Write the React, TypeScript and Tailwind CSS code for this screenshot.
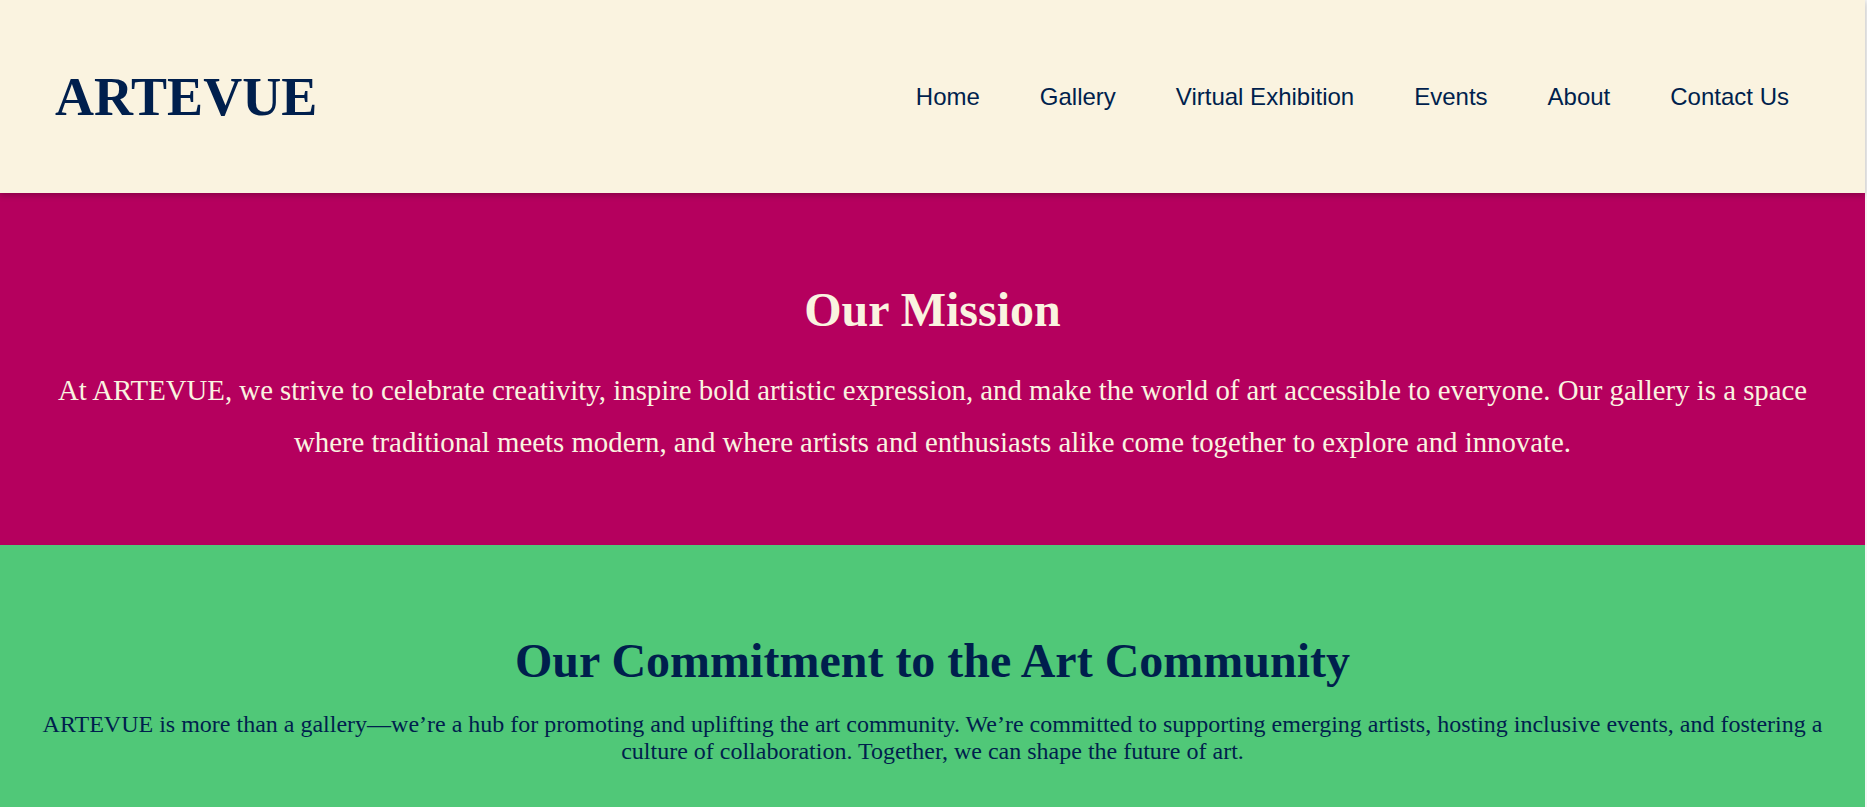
const navLinks = ["Home", "Gallery", "Virtual Exhibition", "Events", "About", "Contact Us"];

export default function App() {
    return (
        <div className="min-h-screen bg-[#f5f5f5]" style={{ fontFamily: '"Liberation Serif", "Times New Roman", serif' }}>
            <div className="w-[1865px]">
                <header className="relative z-10 flex h-[193px] items-center justify-between bg-[#FAF3E0] pl-[55px] pr-[76px] shadow-[0_2px_6px_rgba(0,0,0,0.25)]">
                    <h1 className="text-[54px] font-bold leading-none text-[#001F4D]">ARTEVUE</h1>
                    <nav className="flex items-center gap-[60px] font-['Liberation_Sans',Arial,sans-serif] text-[24px] text-[#001F4D]">
                        {navLinks.map((link) => (
                            <a key={link} href="#" className="hover:opacity-70">
                                {link}
                            </a>
                        ))}
                    </nav>
                </header>

                <section className="flex h-[352px] flex-col items-center bg-[#B5005E] px-[40px] pt-[93px] text-center">
                    <h2 className="text-[48px] font-bold leading-[48px] text-[#FAF3E0]">Our Mission</h2>
                    <p className="mt-[30px] text-[28.8px] leading-[52px] text-[#FAF3E0]">
                        At ARTEVUE, we strive to celebrate creativity, inspire bold artistic expression, and make the world of art accessible to everyone. Our gallery is a space where traditional meets modern, and where artists and enthusiasts alike come together to explore and innovate.
                    </p>
                </section>

                <section className="flex min-h-[262px] flex-col items-center bg-[#50C878] px-[20px] pt-[92px] pb-[40px] text-center text-[#001F4D]">
                    <h2 className="text-[48px] font-bold leading-[48px]">Our Commitment to the Art Community</h2>
                    <p className="mt-[26px] text-[24px] leading-[27px]">
                        ARTEVUE is more than a gallery—we’re a hub for promoting and uplifting the art community. We’re committed to supporting emerging artists, hosting inclusive events, and fostering a culture of collaboration. Together, we can shape the future of art.
                    </p>
                </section>
            </div>
        </div>
    )
}
